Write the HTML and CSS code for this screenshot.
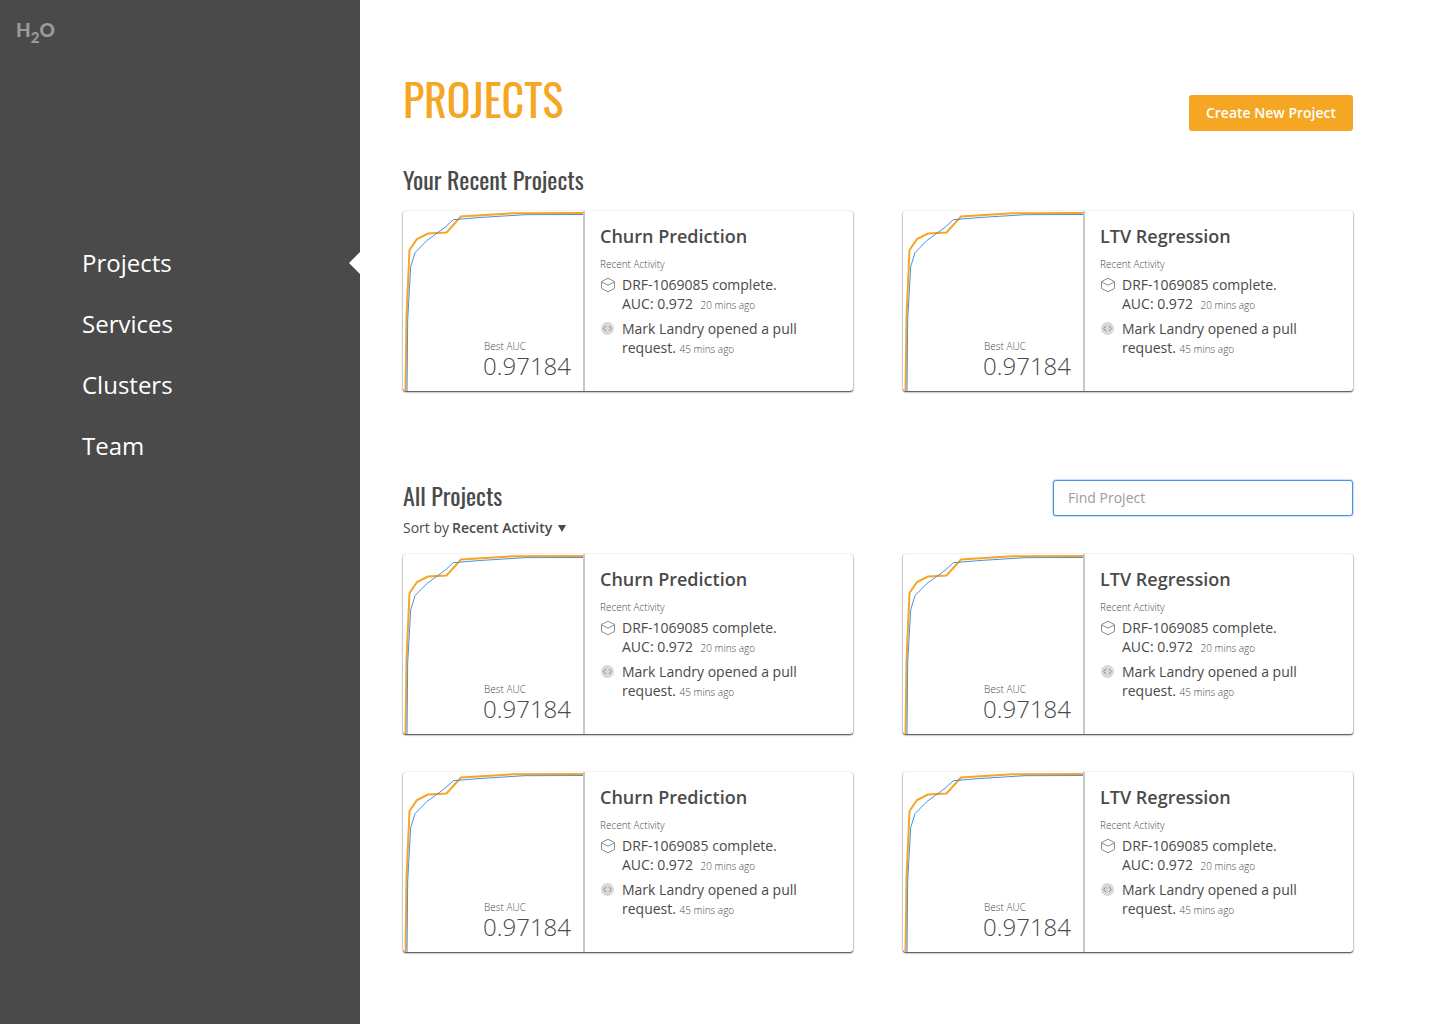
FILE: index.html
```html
<!DOCTYPE html>
<html lang="en">
<head>
<meta charset="utf-8">
<meta name="viewport" content="width=device-width, initial-scale=1">
<title>Projects</title>
<link rel="stylesheet" href="styles.css">
</head>
<body>
<svg class="sprite" aria-hidden="true">
  <symbol id="roc" viewBox="0 0 180 180" preserveAspectRatio="none">
    <polyline class="curve-best" points="2.5,180 3.5,106 6.5,39 14,28 25,22.5 43.5,21.5 58,5.5 109,2.3 180,2"/>
    <polyline class="curve-other" points="4,180 4.7,109 7.7,55.7 12,41.7 23.7,29.7 42,16.3 50.3,8.7 77,6.5 122,3.7 180,3.5"/>
  </symbol>
  <symbol id="cube" viewBox="0 0 16 16">
    <path class="cube-line" d="M8 1.2 14.5 4.6V11.4L8 14.8 1.5 11.4V4.6ZM1.7 4.9 8 8.2 14.3 4.9"/>
  </symbol>
  <symbol id="code" viewBox="0 0 16 16">
    <circle class="code-disc" cx="7.5" cy="7.5" r="6.5"/>
    <path class="code-line" d="M6 5 3.6 7.5 6 10M9 5 11.4 7.5 9 10"/>
  </symbol>
</svg>
<div class="app">
  <aside class="sidebar">
    <a class="logo" href="#" aria-label="H2O home">H<span class="logo-sub">2</span>O</a>
    <nav class="nav" aria-label="Main">
      <a class="nav-link nav-current" href="#" aria-current="page">Projects</a>
      <a class="nav-link" href="#">Services</a>
      <a class="nav-link" href="#">Clusters</a>
      <a class="nav-link" href="#">Team</a>
    </nav>
  </aside>
  <main class="main">
    <header class="page-head">
      <h1 class="page-title">PROJECTS</h1>
      <button class="create" type="button">Create New Project</button>
    </header>

    <section class="recent">
      <h2 class="section-title">Your Recent Projects</h2>
      <div class="cards">
        <article class="card">
          <div class="chart">
            <svg class="roc"><use href="#roc"/></svg>
            <div class="score"><span class="score-label">Best AUC</span><span class="score-value">0.97184</span></div>
          </div>
          <div class="info">
            <h3 class="card-title">Churn Prediction</h3>
            <p class="label">Recent Activity</p>
            <ul class="activity">
              <li class="event"><svg class="icon"><use href="#cube"/></svg><span>DRF-1069085 complete.<br>AUC: 0.972 <time class="time time-wide">20 mins ago</time></span></li>
              <li class="event"><svg class="icon"><use href="#code"/></svg><span>Mark Landry opened a pull<br>request. <time class="time">45 mins ago</time></span></li>
            </ul>
          </div>
        </article>
        <article class="card">
          <div class="chart">
            <svg class="roc"><use href="#roc"/></svg>
            <div class="score"><span class="score-label">Best AUC</span><span class="score-value">0.97184</span></div>
          </div>
          <div class="info">
            <h3 class="card-title">LTV Regression</h3>
            <p class="label">Recent Activity</p>
            <ul class="activity">
              <li class="event"><svg class="icon"><use href="#cube"/></svg><span>DRF-1069085 complete.<br>AUC: 0.972 <time class="time time-wide">20 mins ago</time></span></li>
              <li class="event"><svg class="icon"><use href="#code"/></svg><span>Mark Landry opened a pull<br>request. <time class="time">45 mins ago</time></span></li>
            </ul>
          </div>
        </article>
      </div>
    </section>

    <section class="all">
      <div class="all-head">
        <div class="all-heading">
          <h2 class="section-title">All Projects</h2>
          <button class="sort" type="button">Sort by <strong class="sort-key">Recent Activity</strong><span class="sort-arrow" aria-hidden="true"></span></button>
        </div>
        <input class="search" type="search" placeholder="Find Project" aria-label="Find Project">
      </div>
      <div class="cards">
        <article class="card">
          <div class="chart">
            <svg class="roc"><use href="#roc"/></svg>
            <div class="score"><span class="score-label">Best AUC</span><span class="score-value">0.97184</span></div>
          </div>
          <div class="info">
            <h3 class="card-title">Churn Prediction</h3>
            <p class="label">Recent Activity</p>
            <ul class="activity">
              <li class="event"><svg class="icon"><use href="#cube"/></svg><span>DRF-1069085 complete.<br>AUC: 0.972 <time class="time time-wide">20 mins ago</time></span></li>
              <li class="event"><svg class="icon"><use href="#code"/></svg><span>Mark Landry opened a pull<br>request. <time class="time">45 mins ago</time></span></li>
            </ul>
          </div>
        </article>
        <article class="card">
          <div class="chart">
            <svg class="roc"><use href="#roc"/></svg>
            <div class="score"><span class="score-label">Best AUC</span><span class="score-value">0.97184</span></div>
          </div>
          <div class="info">
            <h3 class="card-title">LTV Regression</h3>
            <p class="label">Recent Activity</p>
            <ul class="activity">
              <li class="event"><svg class="icon"><use href="#cube"/></svg><span>DRF-1069085 complete.<br>AUC: 0.972 <time class="time time-wide">20 mins ago</time></span></li>
              <li class="event"><svg class="icon"><use href="#code"/></svg><span>Mark Landry opened a pull<br>request. <time class="time">45 mins ago</time></span></li>
            </ul>
          </div>
        </article>
        <article class="card">
          <div class="chart">
            <svg class="roc"><use href="#roc"/></svg>
            <div class="score"><span class="score-label">Best AUC</span><span class="score-value">0.97184</span></div>
          </div>
          <div class="info">
            <h3 class="card-title">Churn Prediction</h3>
            <p class="label">Recent Activity</p>
            <ul class="activity">
              <li class="event"><svg class="icon"><use href="#cube"/></svg><span>DRF-1069085 complete.<br>AUC: 0.972 <time class="time time-wide">20 mins ago</time></span></li>
              <li class="event"><svg class="icon"><use href="#code"/></svg><span>Mark Landry opened a pull<br>request. <time class="time">45 mins ago</time></span></li>
            </ul>
          </div>
        </article>
        <article class="card">
          <div class="chart">
            <svg class="roc"><use href="#roc"/></svg>
            <div class="score"><span class="score-label">Best AUC</span><span class="score-value">0.97184</span></div>
          </div>
          <div class="info">
            <h3 class="card-title">LTV Regression</h3>
            <p class="label">Recent Activity</p>
            <ul class="activity">
              <li class="event"><svg class="icon"><use href="#cube"/></svg><span>DRF-1069085 complete.<br>AUC: 0.972 <time class="time time-wide">20 mins ago</time></span></li>
              <li class="event"><svg class="icon"><use href="#code"/></svg><span>Mark Landry opened a pull<br>request. <time class="time">45 mins ago</time></span></li>
            </ul>
          </div>
        </article>
      </div>
    </section>
  </main>
</div>
</body>
</html>
```
FILE: styles.css
```css
* { box-sizing: border-box; }

body {
  margin: 0;
  background: #fff;
  color: #4a4a4a;
  font: 14px/19px "Open Sans", sans-serif;
}

h1, h2, h3, p, ul { margin: 0; padding: 0; }
ul { list-style: none; }
a { color: inherit; text-decoration: none; }

.sprite { position: absolute; width: 0; height: 0; }

.app {
  display: grid;
  grid-template-columns: 1fr 3fr;
  min-height: 100vh;
}

/* Sidebar */
.sidebar {
  display: flex;
  flex-direction: column;
  align-items: stretch;
  gap: 202px;
  padding: 16px 0;
  background: #4a4a4a;
  color: #fff;
}

.logo {
  height: 28px;
  padding-left: 16px;
  color: #9b9b9b;
  font: 900 19px/28px Lato, sans-serif;
}

.logo-sub {
  position: relative;
  top: 6px;
  font-size: 15px;
}

.nav {
  display: flex;
  flex-direction: column;
  gap: 28px;
}

.nav-link {
  position: relative;
  padding-left: 82px;
  font-size: 24px;
  line-height: 33px;
}

.nav-current::after {
  content: "";
  position: absolute;
  top: 6px;
  right: 0;
  border: solid transparent;
  border-width: 11px 11px 11px 0;
  border-right-color: #fff;
}

/* Page */
.main { padding: 64px 87px 64px 43px; }

.page-head {
  display: flex;
  justify-content: space-between;
  align-items: flex-end;
}

.page-title {
  padding-bottom: 2px;
  color: #f5a623;
  font: 400 44px/70px Oswald, "Liberation Sans Narrow", "Roboto Condensed", sans-serif;
}

.create {
  width: 164px;
  height: 36px;
  margin-bottom: 5px;
  padding: 0 0 2px;
  border: 0;
  border-radius: 3px;
  background: #f5a623;
  color: #fff;
  font: 600 14px/19px "Open Sans", sans-serif;
}

.section-title {
  font: 400 24px/36px Oswald, "Liberation Sans Narrow", "Roboto Condensed", sans-serif;
}

.recent {
  display: flex;
  flex-direction: column;
  gap: 14px;
  padding-top: 25px;
}

.all { padding-top: 86px; }

.all-head {
  display: flex;
  justify-content: space-between;
  align-items: flex-start;
  padding-bottom: 17px;
}

.sort {
  display: flex;
  align-items: center;
  gap: 3px;
  margin-top: 5px;
  padding: 0;
  border: 0;
  background: none;
  color: inherit;
  font: inherit;
}

.sort-key { font-weight: 600; }

.sort-arrow {
  margin: 2px 0 0 3px;
  border: solid transparent;
  border-width: 7px 4px 0;
  border-top-color: #4a4a4a;
}

.search {
  width: 300px;
  height: 36px;
  margin-top: 3px;
  padding: 0 14px 2px;
  border: 1px solid #4a90e2;
  border-radius: 3px;
  background: #fff;
  box-shadow: 0 0 2px #4a90e2;
  color: #4a4a4a;
  font: 14px/19px "Open Sans", sans-serif;
}

.search::placeholder { color: #9b9b9b; opacity: 1; }

/* Project cards */
.cards {
  display: grid;
  grid-template-columns: 1fr 1fr;
  gap: 38px 50px;
}

.card {
  display: flex;
  min-height: 180px;
  border-radius: 3px;
  background: #fff;
  box-shadow: 0 0 1px rgba(0, 0, 0, .2), 0 1px 2px rgba(0, 0, 0, .6), 0 1px 1px rgba(0, 0, 0, .3);
  overflow: hidden;
}

.chart {
  display: grid;
  flex: none;
  width: 182px;
  border-right: 2px solid #c8c8c8;
}

.roc {
  grid-area: 1 / 1;
  width: 100%;
  height: 100%;
}

.curve-best, .curve-other { fill: none; }
.curve-best { stroke: #f5a623; stroke-width: 2; }
.curve-other { stroke: #4a90e2; stroke-width: 1; }

.score {
  grid-area: 1 / 1;
  display: flex;
  flex-direction: column;
  justify-self: end;
  align-self: end;
  padding: 0 12px 12px 0;
  font-weight: 300;
}

.score-label { padding-left: 1px; font-size: 10px; line-height: 14px; }
.score-value { font-size: 24px; line-height: 26px; }

.info { padding: 12px 15px; }

.card-title {
  font-size: 18px;
  font-weight: 600;
  line-height: 26px;
}

.label {
  padding: 8px 0 4px;
  font-size: 10px;
  font-weight: 300;
  line-height: 14px;
}

.activity {
  display: flex;
  flex-direction: column;
  gap: 6px;
}

.event { display: flex; gap: 6px; }

.icon {
  flex: none;
  width: 16px;
  height: 16px;
  margin-top: 2px;
}

.cube-line { fill: none; stroke: #8b8b8b; stroke-width: 1; }
.code-disc { fill: #d8d8d8; }
.code-line { fill: none; stroke: #8b8b8b; stroke-width: 1; }

.time { font-size: 10px; font-weight: 300; line-height: 12px; }
.time-wide { margin-left: 4px; }
```
